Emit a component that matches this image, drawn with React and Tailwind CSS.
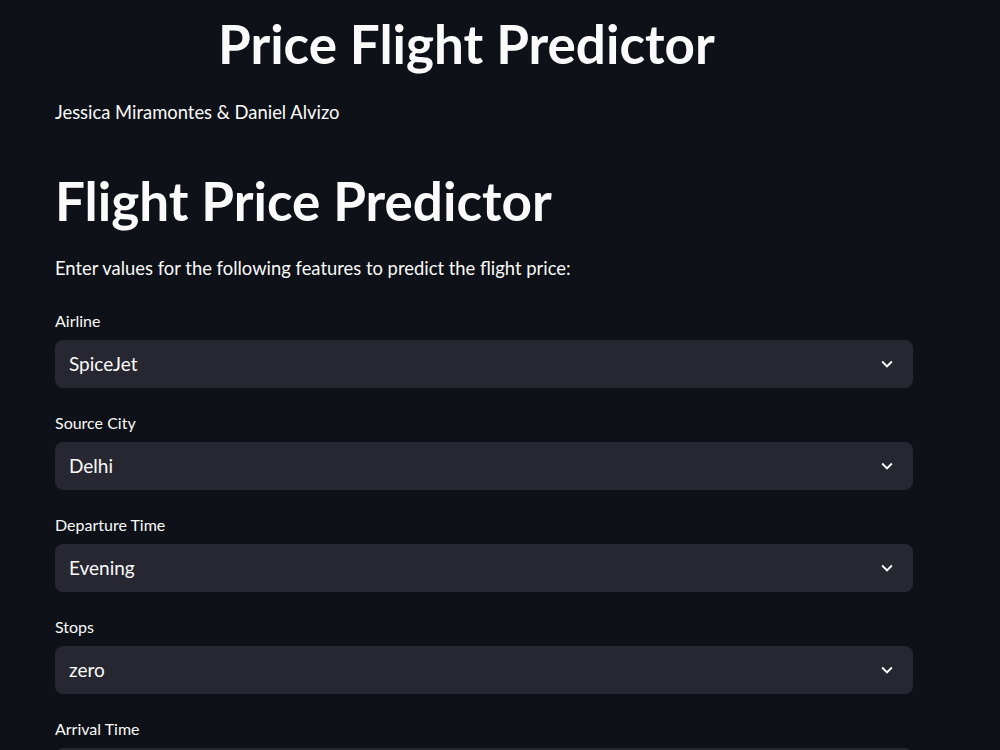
import React from 'react';

const fields = [
  { label: 'Airline', value: 'SpiceJet' },
  { label: 'Source City', value: 'Delhi' },
  { label: 'Departure Time', value: 'Evening' },
  { label: 'Stops', value: 'zero' },
  { label: 'Arrival Time', value: 'Night' },
];

function Chevron() {
  return (
    <svg viewBox="0 0 24 24" className="w-[22px] h-[22px]" fill="currentColor">
      <path d="M7.41 8.59 12 13.17l4.59-4.58L18 10l-6 6-6-6 1.41-1.41z" />
    </svg>
  );
}

function SelectBox({ label, value }) {
  return (
    <div className="mb-[25px]">
      <label className="block text-[16px] leading-[20px] text-[#fafafa] mb-[9px] h-[20px]">{label}</label>
      <div className="h-[48px] rounded-[8px] bg-[#262730] flex items-center justify-between pl-[14px] pr-[15px]">
        <span className="text-[19px] text-[#fafafa]">{value}</span>
        <span className="text-[#fafafa]"><Chevron /></span>
      </div>
    </div>
  );
}

export default function App() {
  return (
    <div
      className="h-screen bg-[#0e1117] text-[#fafafa] overflow-hidden"
      style={{ fontFamily: 'Lato, "Noto Sans", sans-serif' }}
    >
      <div className="w-[858px] ml-[55px] pt-[11px]">
        <h1 className="text-[53px] font-bold leading-[66px] pl-[163px]">Price Flight Predictor</h1>
        <p className="mt-[23px] text-[18.4px] leading-[24px]">Jessica Miramontes &amp; Daniel Alvizo</p>
        <h1 className="mt-[44px] text-[53px] font-bold leading-[66px]">Flight Price Predictor</h1>
        <p className="mt-[22px] text-[18.4px] leading-[24px]">Enter values for the following features to predict the flight price:</p>
        <div className="mt-[31px]">
          {fields.map((f) => (
            <SelectBox key={f.label} label={f.label} value={f.value} />
          ))}
        </div>
      </div>
    </div>
  );
}
